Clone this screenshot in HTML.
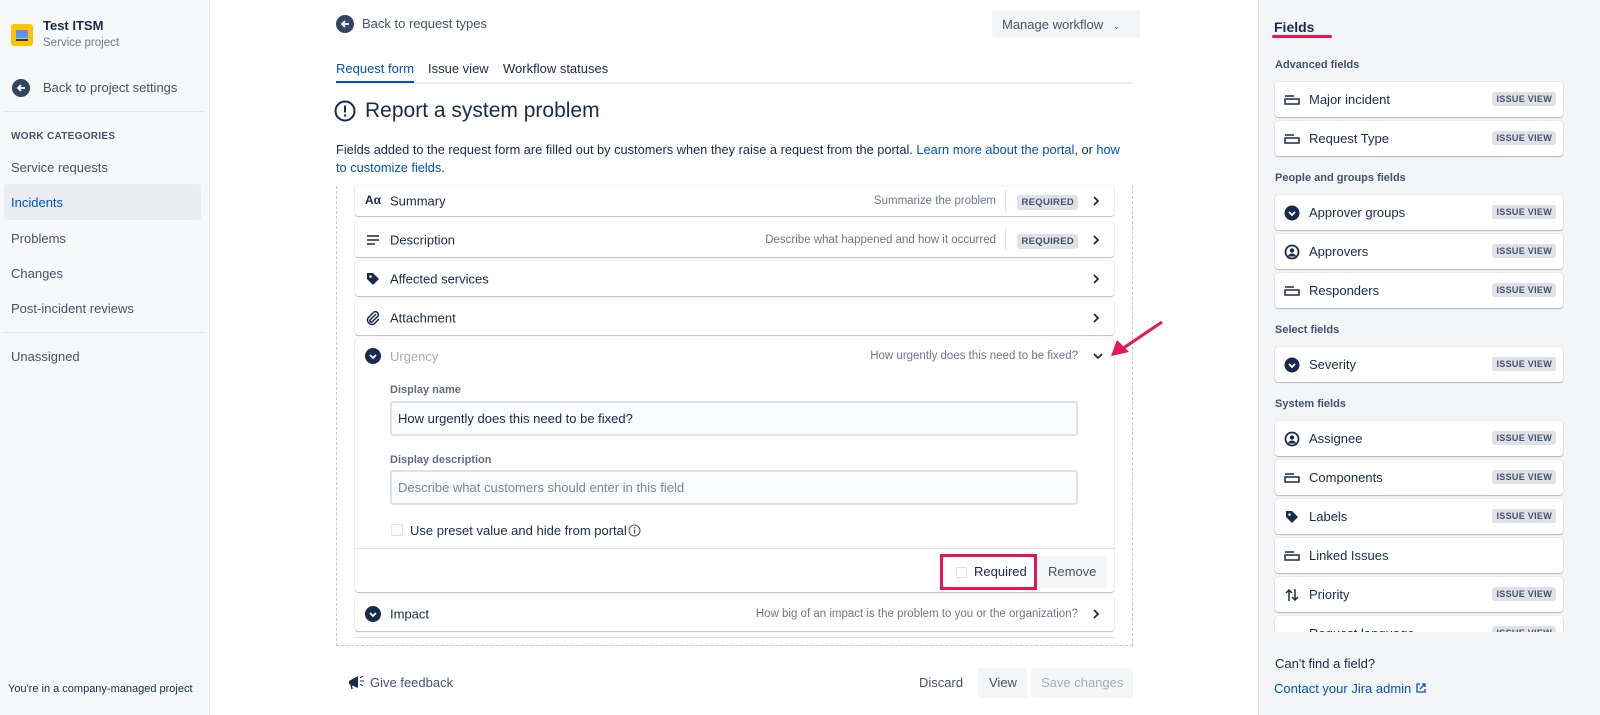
<!DOCTYPE html>
<html><head><meta charset="utf-8"><style>
*{box-sizing:border-box;margin:0;padding:0}
body{width:1600px;height:715px;overflow:hidden;background:#fff;font-family:"Liberation Sans",sans-serif;color:#172b4d;font-size:13px;position:relative}
.a{position:absolute}
#side{left:0;top:0;width:210px;height:715px;background:#f7f8f9;border-right:1px solid #e4e6ea}
#right{left:1258px;top:0;width:342px;height:715px;background:#f4f5f7;border-left:1px solid #dfe1e6}
.nav{position:absolute;left:11px;font-size:13px;color:#42526e}
.row{position:absolute;left:355px;width:759px;background:#fff;border-radius:3px;box-shadow:0 1px 1px rgba(9,30,66,.25),0 0 1px rgba(9,30,66,.31)}
.row .lab{position:absolute;left:35px;top:50%;transform:translateY(-50%);font-size:13px}
.row .ic{position:absolute;left:10px;top:50%;transform:translateY(-50%);width:16px;height:16px}
.row .hint{position:absolute;top:50%;transform:translateY(-50%);font-size:11.5px;color:#6b778c}
.chev{position:absolute;right:14px;top:50%;transform:translateY(-50%)}
.lz{font-size:9.5px;font-weight:bold;color:#42526e;background:#dfe1e6;border-radius:3px;padding:2px 4px;letter-spacing:.3px}
.card{position:absolute;left:1275px;width:288px;height:35px;background:#fff;border-radius:3px;box-shadow:0 1px 1px rgba(9,30,66,.25),0 0 1px rgba(9,30,66,.31)}
.card .lab{position:absolute;left:34px;top:10px;font-size:13px}
.card .ic{position:absolute;left:9px;top:10px;width:16px;height:16px}
.card .lz{position:absolute;right:7px;top:10px;font-size:9px}
.sh{position:absolute;left:1275px;font-size:11px;font-weight:bold;color:#42526e}
</style></head><body>

<div class="a" id="side">
 <div class="a" style="left:11px;top:24px;width:22px;height:22px;background:#ffc400;border-radius:3px"><svg width="22" height="22"><rect x="5" y="6" width="12" height="8" fill="#4c9aff"/><rect x="5" y="15" width="12" height="2" fill="#253858"/><circle cx="13" cy="8" r="1.5" fill="#ff5630"/></svg></div>
 <div class="a" style="left:43px;top:18px;font-weight:bold;font-size:13px">Test ITSM</div>
 <div class="a" style="left:43px;top:37px;font-size:11.5px;color:#6b778c">Service project</div>
 <svg class="a" style="left:12px;top:79px" width="18" height="18"><circle cx="9" cy="9" r="9" fill="#344563"/><path d="M13 9H6M9 6L6 9l3 3" stroke="#fff" stroke-width="1.8" fill="none"/></svg>
 <div class="nav" style="left:43px;top:80px;font-size:13px">Back to project settings</div>
 <div class="a" style="left:4px;top:111px;width:201px;height:1px;background:#e4e6ea"></div>
 <div class="nav" style="top:131px;font-size:10px;font-weight:bold;letter-spacing:.3px">WORK CATEGORIES</div>
 <div class="nav" style="top:160px">Service requests</div>
 <div class="a" style="left:4px;top:184px;width:197px;height:36px;background:#ebecf0;border-radius:3px"></div>
 <div class="nav" style="top:195px;color:#0052cc">Incidents</div>
 <div class="nav" style="top:231px">Problems</div>
 <div class="nav" style="top:266px">Changes</div>
 <div class="nav" style="top:301px">Post-incident reviews</div>
 <div class="a" style="left:4px;top:332px;width:201px;height:1px;background:#e4e6ea"></div>
 <div class="nav" style="top:349px">Unassigned</div>
 <div class="nav" style="left:8px;top:683px;font-size:11px;color:#172b4d">You're in a company-managed project</div>
</div>

<svg class="a" style="left:336px;top:15px" width="18" height="18"><circle cx="9" cy="9" r="9" fill="#344563"/><path d="M13 9H6M9 6L6 9l3 3" stroke="#fff" stroke-width="1.8" fill="none"/></svg>
<div class="a" style="left:362px;top:16px;color:#42526e">Back to request types</div>
<div class="a" style="left:992px;top:10px;width:148px;height:28px;background:#f4f5f7;border-radius:3px;color:#42526e;padding:7px 0 0 10px">Manage workflow <span style="font-size:9px;margin-left:6px">&#8964;</span></div>
<div class="a" style="left:336px;top:61px;color:#0052cc">Request form</div>
<div class="a" style="left:428px;top:61px;color:#172b4d">Issue view</div>
<div class="a" style="left:503px;top:61px;color:#172b4d">Workflow statuses</div>
<div class="a" style="left:336px;top:82px;width:797px;height:2px;background:#ebecf0"></div>
<div class="a" style="left:336px;top:81px;width:78px;height:2px;background:#0052cc"></div>
<svg class="a" style="left:334px;top:100px" width="22" height="22"><circle cx="11" cy="11" r="9.5" stroke="#172b4d" stroke-width="2" fill="none"/><rect x="10" y="5.5" width="2" height="7" fill="#172b4d"/><circle cx="11" cy="15.5" r="1.2" fill="#172b4d"/></svg>
<div class="a" style="left:365px;top:99px;font-size:21px">Report a system problem</div>
<div class="a" style="left:336px;top:141px;width:797px;line-height:18px;font-size:12.8px">Fields added to the request form are filled out by customers when they raise a request from the portal. <span style="color:#0052cc">Learn more about the portal</span>, or <span style="color:#0052cc">how to customize fields</span>.</div>

<div class="a" style="left:336px;top:186px;width:797px;height:460px;border:1px dashed #c1c7d0;border-top:none"></div>

<div class="row" style="top:186px;height:30px;border-radius:0 0 3px 3px"><div class="ic" style="font-weight:bold;font-size:12px;width:20px">Aα</div><div class="lab">Summary</div><div class="hint" style="right:118px">Summarize the problem</div><div class="a" style="right:108px;top:4px;width:1px;height:22px;background:#dfe1e6"></div><span class="lz a" style="right:36px;top:9px">REQUIRED</span><svg class="chev" width="8" height="12"><path d="M2 2l4 4-4 4" stroke="#172b4d" stroke-width="1.8" fill="none"/></svg></div>
<div class="row" style="top:222px;height:35px"><svg class="ic" viewBox="0 0 16 16"><path d="M2 4h12M2 8h12M2 12h8" stroke="#172b4d" stroke-width="1.6"/></svg><div class="lab">Description</div><div class="hint" style="right:118px">Describe what happened and how it occurred</div><div class="a" style="right:108px;top:6px;width:1px;height:22px;background:#dfe1e6"></div><span class="lz a" style="right:36px;top:12px">REQUIRED</span><svg class="chev" width="8" height="12"><path d="M2 2l4 4-4 4" stroke="#172b4d" stroke-width="1.8" fill="none"/></svg></div>
<div class="row" style="top:261px;height:35px"><svg class="ic" viewBox="0 0 16 16"><path d="M2 2h6l6 6-6 6-6-6z" fill="#172b4d"/><circle cx="5.5" cy="5.5" r="1.3" fill="#fff"/></svg><div class="lab">Affected services</div><svg class="chev" width="8" height="12"><path d="M2 2l4 4-4 4" stroke="#172b4d" stroke-width="1.8" fill="none"/></svg></div>
<div class="row" style="top:300px;height:35px"><svg class="ic" viewBox="0 0 16 16"><path d="M11 4L5 10a1.5 1.5 0 002 2l6-6a3 3 0 00-4-4L3 8a4.5 4.5 0 006 6l5-5" stroke="#172b4d" stroke-width="1.5" fill="none"/></svg><div class="lab">Attachment</div><svg class="chev" width="8" height="12"><path d="M2 2l4 4-4 4" stroke="#172b4d" stroke-width="1.8" fill="none"/></svg></div>

<div class="row" style="top:339px;height:253px">
 <svg class="a" style="left:10px;top:9px" width="16" height="16"><circle cx="8" cy="8" r="8" fill="#172b4d"/><path d="M5 7l3 3 3-3" stroke="#fff" stroke-width="1.8" fill="none"/></svg>
 <div class="a" style="left:35px;top:10px;color:#a5adba">Urgency</div>
 <div class="a" style="right:36px;top:11px;font-size:11.5px;color:#6b778c">How urgently does this need to be fixed?</div>
 <svg class="a" style="right:10px;top:13px" width="12" height="8"><path d="M2 2l4 4 4-4" stroke="#172b4d" stroke-width="1.8" fill="none"/></svg>
 <div class="a" style="left:35px;top:45px;font-size:11px;font-weight:bold;color:#5e6c84">Display name</div>
 <div class="a" style="left:35px;top:62px;width:688px;height:35px;background:#fafbfc;border:2px solid #dfe1e6;border-radius:3px;padding:8px 0 0 6px">How urgently does this need to be fixed?</div>
 <div class="a" style="left:35px;top:115px;font-size:11px;font-weight:bold;color:#5e6c84">Display description</div>
 <div class="a" style="left:35px;top:131px;width:688px;height:35px;background:#fafbfc;border:2px solid #dfe1e6;border-radius:3px;padding:8px 0 0 6px;color:#7a869a">Describe what customers should enter in this field</div>
 <div class="a" style="left:36px;top:185px;width:12px;height:12px;border:1.5px solid #dfe1e6;border-radius:2px;background:#fafbfc"></div>
 <div class="a" style="left:55px;top:184px">Use preset value and hide from portal</div>
 <svg class="a" style="left:273px;top:185px" width="13" height="13"><circle cx="6.5" cy="6.5" r="5.5" stroke="#42526e" fill="none"/><rect x="6" y="5.5" width="1.2" height="4" fill="#42526e"/><circle cx="6.6" cy="3.8" r=".8" fill="#42526e"/></svg>
 <div class="a" style="left:0;top:209px;width:759px;height:1px;background:#dfe1e6"></div>
 <div class="a" style="left:682px;top:217px;width:70px;height:32px;background:#f4f5f7;border-radius:3px;color:#42526e;padding:8px 0 0 11px">Remove</div>
 <div class="a" style="left:601px;top:228px;width:11px;height:11px;border:1.5px solid #dfe1e6;border-radius:2px"></div>
 <div class="a" style="left:619px;top:225px">Required</div>
</div>
<div class="a" style="left:940px;top:554px;width:97px;height:36px;border:3px solid #e8174f"></div>

<div class="row" style="top:596px;height:35px"><svg class="ic" viewBox="0 0 16 16"><circle cx="8" cy="8" r="8" fill="#172b4d"/><path d="M5 7l3 3 3-3" stroke="#fff" stroke-width="1.8" fill="none"/></svg><div class="lab">Impact</div><div class="hint" style="right:36px">How big of an impact is the problem to you or the organization?</div><svg class="chev" width="8" height="12"><path d="M2 2l4 4-4 4" stroke="#172b4d" stroke-width="1.8" fill="none"/></svg></div>
<div class="a" style="left:355px;top:637px;width:759px;height:1px;background:#dfe1e6"></div>

<svg class="a" style="left:347px;top:674px" width="18" height="16"><path d="M2 7l9-5v12l-9-4z" fill="#172b4d"/><path d="M4 10l1 5" stroke="#172b4d" stroke-width="1.5"/><path d="M13 4l3-2M13 7h4M13 10l3 2" stroke="#172b4d" stroke-width="1"/></svg>
<div class="a" style="left:370px;top:675px;color:#42526e">Give feedback</div>
<div class="a" style="left:919px;top:675px;color:#42526e">Discard</div>
<div class="a" style="left:978px;top:668px;width:49px;height:30px;background:#f4f5f7;border-radius:3px;padding:7px 0 0 11px;color:#42526e">View</div>
<div class="a" style="left:1031px;top:668px;width:102px;height:30px;background:#f4f5f7;border-radius:3px;padding:7px 0 0 10px;color:#a5adba">Save changes</div>

<svg class="a" style="left:1105px;top:318px" width="60" height="42"><path d="M57 4L14 33" stroke="#e8174f" stroke-width="3"/><path d="M6 38l6-16 12 12z" fill="#e8174f"/></svg>

<div class="a" id="right"></div>
<div class="a" style="left:1274px;top:19px;font-size:14px;font-weight:bold">Fields</div>
<div class="a" style="left:1272px;top:35px;width:60px;height:3px;background:#e8174f;border-radius:2px"></div>
<div class="sh" style="top:59px">Advanced fields</div>
<div class="sh" style="top:172px">People and groups fields</div>
<div class="sh" style="top:324px">Select fields</div>
<div class="sh" style="top:398px">System fields</div>

<div class="a" style="left:1270px;top:78px;width:300px;height:554px;overflow:hidden">
<div style="position:relative;left:-1270px;top:-78px">
<div class="card" style="top:82px"><svg class="ic"><path d="M1 4h9M1 7h14v5H1z" stroke="#172b4d" stroke-width="1.5" fill="none"/></svg><div class="lab">Major incident</div><span class="lz">ISSUE VIEW</span></div>
<div class="card" style="top:121px"><svg class="ic"><path d="M1 4h9M1 7h14v5H1z" stroke="#172b4d" stroke-width="1.5" fill="none"/></svg><div class="lab">Request Type</div><span class="lz">ISSUE VIEW</span></div>
<div class="card" style="top:195px"><svg class="ic"><circle cx="8" cy="8" r="7.5" fill="#172b4d"/><path d="M5 7l3 3 3-3" stroke="#fff" stroke-width="1.8" fill="none"/></svg><div class="lab">Approver groups</div><span class="lz">ISSUE VIEW</span></div>
<div class="card" style="top:234px"><svg class="ic"><circle cx="8" cy="8" r="6.5" stroke="#172b4d" stroke-width="1.8" fill="none"/><circle cx="8" cy="6.5" r="2.2" fill="#172b4d"/><path d="M4 12.5a4 3 0 018 0" fill="#172b4d"/></svg><div class="lab">Approvers</div><span class="lz">ISSUE VIEW</span></div>
<div class="card" style="top:273px"><svg class="ic"><path d="M1 4h9M1 7h14v5H1z" stroke="#172b4d" stroke-width="1.5" fill="none"/></svg><div class="lab">Responders</div><span class="lz">ISSUE VIEW</span></div>
<div class="card" style="top:347px"><svg class="ic"><circle cx="8" cy="8" r="7.5" fill="#172b4d"/><path d="M5 7l3 3 3-3" stroke="#fff" stroke-width="1.8" fill="none"/></svg><div class="lab">Severity</div><span class="lz">ISSUE VIEW</span></div>
<div class="card" style="top:421px"><svg class="ic"><circle cx="8" cy="8" r="6.5" stroke="#172b4d" stroke-width="1.8" fill="none"/><circle cx="8" cy="6.5" r="2.2" fill="#172b4d"/><path d="M4 12.5a4 3 0 018 0" fill="#172b4d"/></svg><div class="lab">Assignee</div><span class="lz">ISSUE VIEW</span></div>
<div class="card" style="top:460px"><svg class="ic"><path d="M1 4h9M1 7h14v5H1z" stroke="#172b4d" stroke-width="1.5" fill="none"/></svg><div class="lab">Components</div><span class="lz">ISSUE VIEW</span></div>
<div class="card" style="top:499px"><svg class="ic"><path d="M2 2h6l6 6-6 6-6-6z" fill="#172b4d"/><circle cx="5.5" cy="5.5" r="1.3" fill="#fff"/></svg><div class="lab">Labels</div><span class="lz">ISSUE VIEW</span></div>
<div class="card" style="top:538px"><svg class="ic"><path d="M1 4h9M1 7h14v5H1z" stroke="#172b4d" stroke-width="1.5" fill="none"/></svg><div class="lab">Linked Issues</div></div>
<div class="card" style="top:577px"><svg class="ic"><path d="M5 14V3M2 6l3-3 3 3M11 2v11M8 10l3 3 3-3" stroke="#172b4d" stroke-width="1.5" fill="none"/></svg><div class="lab">Priority</div><span class="lz">ISSUE VIEW</span></div>
<div class="card" style="top:616px"><svg class="ic"><path d="M1 14h9" stroke="#172b4d" stroke-width="1.5"/></svg><div class="lab">Request language</div><span class="lz">ISSUE VIEW</span></div>
</div></div>
<div class="a" style="left:1275px;top:656px">Can't find a field?</div>
<div class="a" style="left:1274px;top:681px;color:#0052cc">Contact your Jira admin <svg width="12" height="12" style="vertical-align:-1px"><path d="M5 2H2v8h8V7M7 2h3v3M10 2L5 7" stroke="#0052cc" stroke-width="1.3" fill="none"/></svg></div>

</body></html>
